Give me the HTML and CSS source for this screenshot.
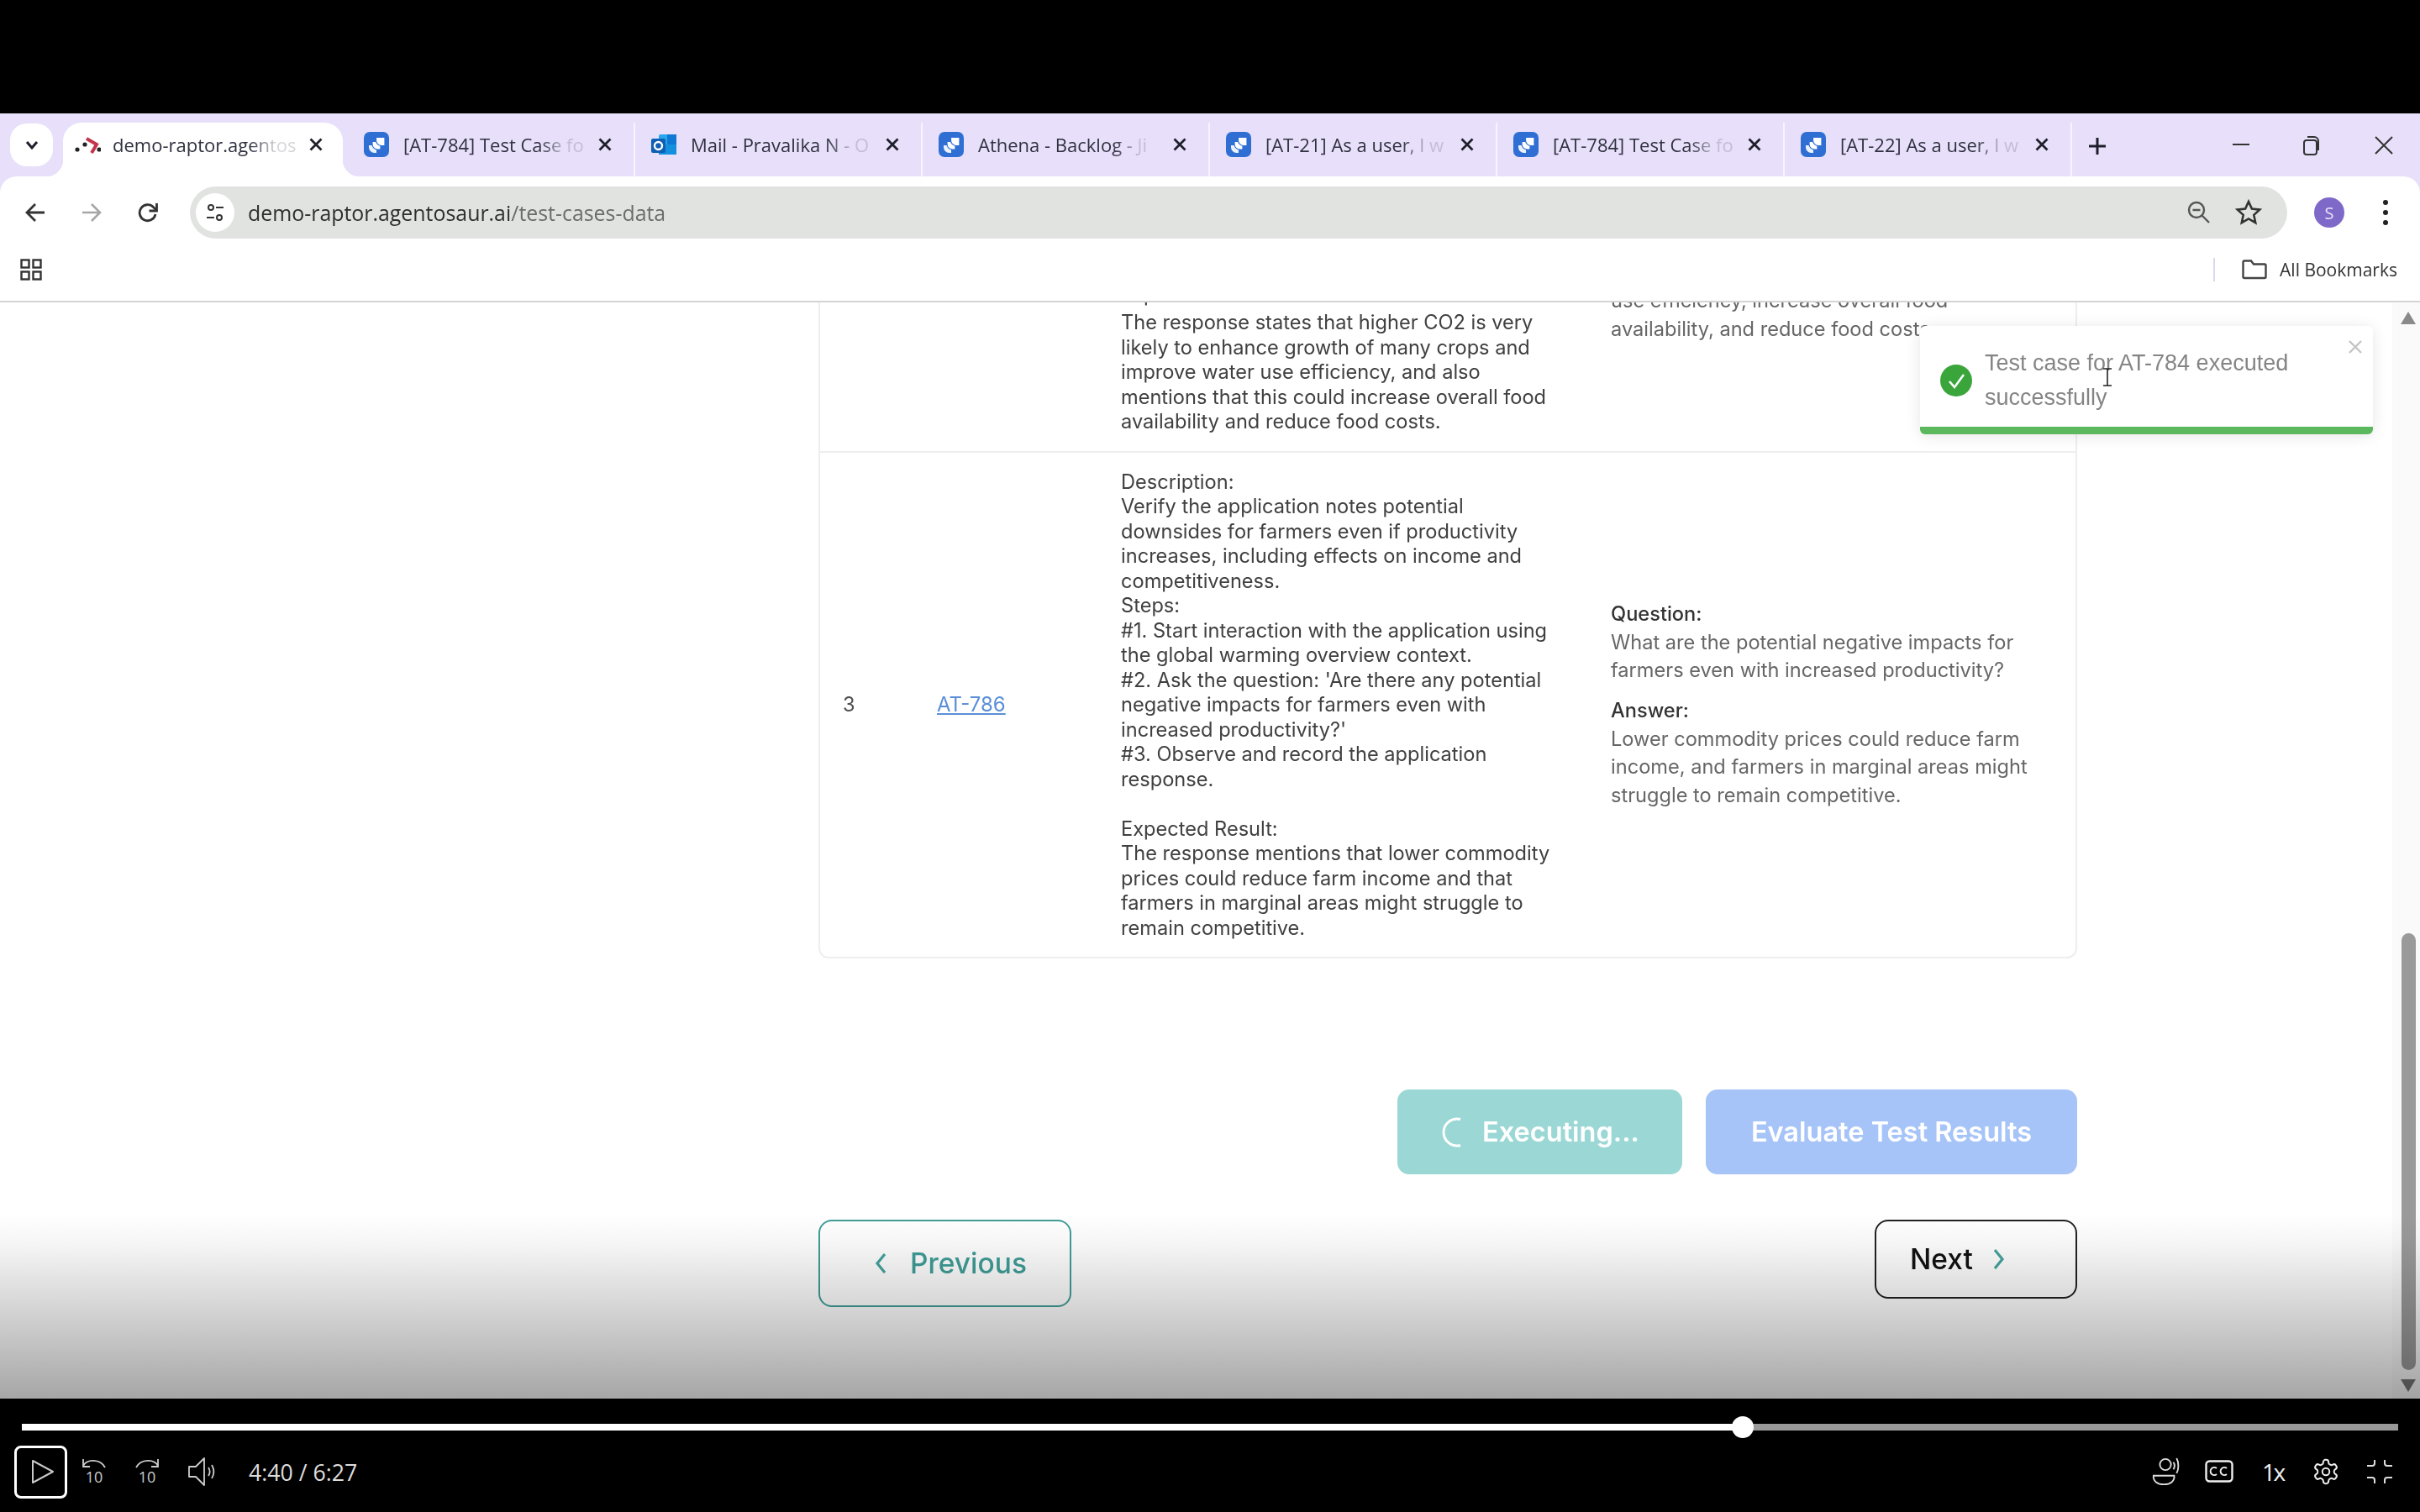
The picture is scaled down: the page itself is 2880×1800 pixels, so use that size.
FILE: index.html
```html
<!DOCTYPE html>
<html lang="en">
<head>
<meta charset="utf-8">
<title>demo-raptor.agentosaur.ai/test-cases-data</title>
<link rel="stylesheet" href="styles.css">
</head>
<body>
<svg class="defs" width="0" height="0" aria-hidden="true">
  <symbol id="jira" viewBox="0 0 30 30">
    <rect width="30" height="30" rx="7" fill="#2f6fd4"/>
    <path d="M6 16h9v9h-2.500A6.500 6.500 0 0 1 6 18.500z" fill="#fff" opacity=".9"/>
    <path d="M10 11.500h10v9.500h-3.500A6.500 6.500 0 0 1 10 14.500z" fill="#fff" stroke="#2f6fd4" stroke-width="1.200"/>
    <path d="M14.500 6.500H25v10h-4A6.500 6.500 0 0 1 14.500 10z" fill="#fff" stroke="#2f6fd4" stroke-width="1.200"/>
  </symbol>
  <symbol id="close" viewBox="0 0 20 20">
    <path d="M3.500 3.500l13 13M16.500 3.500l-13 13" fill="none" stroke="#1f1f2b" stroke-width="2.800"/>
  </symbol>
</svg>

<div class="video-top"></div>

<div class="chrome">
<header class="tabstrip">
  <div class="tab-search">
    <svg width="20" height="14" viewBox="0 0 20 14"><path d="M4 3l6 7 6-7" fill="none" stroke="#1f1f2b" stroke-width="3"/></svg>
  </div>
  <div class="tab tab-active">
    <svg class="favicon" viewBox="0 0 32 30">
      <circle cx="4" cy="21" r="2.600" fill="#222"/><circle cx="13" cy="15" r="2.600" fill="#222"/><circle cx="30" cy="21" r="2.600" fill="#222"/>
      <path d="M15 8l12 7-6 10" fill="none" stroke="#c4344a" stroke-width="4"/>
    </svg>
    <span class="tab-title">demo-raptor.agentos</span>
    <svg class="tab-close"><use href="#close"/></svg>
  </div>
  <div class="tab">
    <svg class="favicon"><use href="#jira"/></svg>
    <span class="tab-title">[AT-784] Test Case fo</span>
    <svg class="tab-close"><use href="#close"/></svg>
  </div>
  <div class="tab">
    <svg class="favicon" viewBox="0 0 30 30">
      <rect x="9" y="3" width="21" height="24" rx="2" fill="#28a8ea"/>
      <rect x="19" y="3" width="11" height="12" fill="#0f78d4"/>
      <rect x="9" y="15" width="21" height="12" fill="#1490df"/>
      <rect x="0" y="8" width="17" height="17" rx="2" fill="#0f5fb4"/>
      <circle cx="8.500" cy="16.500" r="4.500" fill="none" stroke="#fff" stroke-width="2.400"/>
    </svg>
    <span class="tab-title">Mail - Pravalika N - O</span>
    <svg class="tab-close"><use href="#close"/></svg>
  </div>
  <div class="tab">
    <svg class="favicon"><use href="#jira"/></svg>
    <span class="tab-title">Athena - Backlog - Ji</span>
    <svg class="tab-close"><use href="#close"/></svg>
  </div>
  <div class="tab">
    <svg class="favicon"><use href="#jira"/></svg>
    <span class="tab-title">[AT-21] As a user, I w</span>
    <svg class="tab-close"><use href="#close"/></svg>
  </div>
  <div class="tab">
    <svg class="favicon"><use href="#jira"/></svg>
    <span class="tab-title">[AT-784] Test Case fo</span>
    <svg class="tab-close"><use href="#close"/></svg>
  </div>
  <div class="tab">
    <svg class="favicon"><use href="#jira"/></svg>
    <span class="tab-title">[AT-22] As a user, I w</span>
    <svg class="tab-close"><use href="#close"/></svg>
  </div>
  <svg class="tab-new" width="24" height="24" viewBox="0 0 24 24"><path d="M12 2v20M2 12h20" fill="none" stroke="#1f1f2b" stroke-width="3"/></svg>
  <div class="window-controls">
    <svg width="26" height="26" viewBox="0 0 26 26"><path d="M3 12h20" stroke="#333" stroke-width="2"/></svg>
    <svg class="win-restore" width="26" height="26" viewBox="0 0 26 26"><rect x="5" y="7" width="15" height="17" rx="3" fill="none" stroke="#333" stroke-width="2"/><path d="M9 3h8a5 5 0 0 1 5 5v11" fill="none" stroke="#333" stroke-width="2"/></svg>
    <svg width="26" height="26" viewBox="0 0 26 26"><path d="M3 3l20 20M23 3L3 23" stroke="#333" stroke-width="2"/></svg>
  </div>
</header>

<nav class="toolbar">
  <div class="nav-btn"><svg width="26" height="26" viewBox="0 0 26 26"><path d="M24 13H3M13 3L3 13l10 10" fill="none" stroke="#333" stroke-width="2.800"/></svg></div>
  <div class="nav-btn"><svg width="26" height="26" viewBox="0 0 26 26"><path d="M2 13h21M13 3l10 10-10 10" fill="none" stroke="#a6a6a6" stroke-width="2.600"/></svg></div>
  <div class="nav-btn"><svg width="28" height="28" viewBox="0 0 28 28"><path d="M23 16a9.500 9.500 0 1 1-2.600-8.500L24 11" fill="none" stroke="#333" stroke-width="2.800"/><path d="M24.500 3v9h-9" fill="none" stroke="#333" stroke-width="2.800"/></svg></div>
  <div class="omnibox">
    <div class="site-info">
      <svg width="24" height="24" viewBox="0 0 24 24"><circle cx="7" cy="6" r="3" fill="none" stroke="#333" stroke-width="2"/><path d="M13 6h9M2 18h9" stroke="#333" stroke-width="2"/><circle cx="17" cy="18" r="3" fill="none" stroke="#333" stroke-width="2"/></svg>
    </div>
    <span class="url"><span class="url-host">demo-raptor.agentosaur.ai</span>/test-cases-data</span>
    <svg class="zoom-out" width="30" height="30" viewBox="0 0 30 30"><circle cx="12" cy="12" r="9" fill="none" stroke="#555" stroke-width="2.400"/><path d="M7.500 12h9M18.500 18.500L27 27" stroke="#555" stroke-width="2.400"/></svg>
    <svg class="star" width="32" height="32" viewBox="0 0 32 32"><path d="M16 3l3.900 8.600 9.300 1-6.900 6.300 1.900 9.200L16 23.400l-8.200 4.700 1.900-9.200-6.900-6.300 9.300-1z" fill="none" stroke="#333" stroke-width="2.600"/></svg>
  </div>
  <div class="avatar">S</div>
  <div class="kebab"><i></i><i></i><i></i></div>
</nav>

<div class="bookmarks">
  <svg width="26" height="26" viewBox="0 0 26 26"><g fill="none" stroke="#333" stroke-width="2.400"><rect x="1.500" y="1.500" width="9" height="9"/><rect x="15.500" y="1.500" width="9" height="9"/><rect x="1.500" y="15.500" width="9" height="9"/><rect x="15.500" y="15.500" width="9" height="9"/></g></svg>
  <div class="bookmarks-all">
    <svg width="30" height="24" viewBox="0 0 30 24"><path d="M1.500 21V3a1.500 1.500 0 0 1 1.500-1.500h8l3 4h13a1.500 1.500 0 0 1 1.500 1.500v13.500a1.500 1.500 0 0 1-1.500 1.500H3A1.500 1.500 0 0 1 1.500 21z" fill="none" stroke="#444" stroke-width="2.400"/></svg>
    <span>All Bookmarks</span>
  </div>
</div>
</div>

<main class="page">
  <section class="content">
    <div class="table">
      <div class="row row-partial">
        <div></div>
        <div></div>
        <div class="desc"><span class="desc-cut">Expected Result:</span>The response states that higher CO2 is very
likely to enhance growth of many crops and
improve water use efficiency, and also
mentions that this could increase overall food
availability and reduce food costs.</div>
        <div class="qa qa-partial"><p class="qa-text">use efficiency, increase overall food
availability, and reduce food costs.</p></div>
      </div>
      <div class="row row-last">
        <div class="index">3</div>
        <div><a class="issue" href="#">AT-786</a></div>
        <div class="desc">Description:
Verify the application notes potential
downsides for farmers even if productivity
increases, including effects on income and
competitiveness.
Steps:
#1. Start interaction with the application using
the global warming overview context.
#2. Ask the question: 'Are there any potential
negative impacts for farmers even with
increased productivity?'
#3. Observe and record the application
response.

Expected Result:
The response mentions that lower commodity
prices could reduce farm income and that
farmers in marginal areas might struggle to
remain competitive.</div>
        <div class="qa">
          <p class="qa-label">Question:</p>
          <p class="qa-text">What are the potential negative impacts for
farmers even with increased productivity?</p>
          <p class="qa-label qa-label-next">Answer:</p>
          <p class="qa-text">Lower commodity prices could reduce farm
income, and farmers in marginal areas might
struggle to remain competitive.</p>
        </div>
      </div>
    </div>

    <div class="actions">
      <button class="btn btn-exec" type="button">
        <svg width="36" height="38" viewBox="0 0 36 38"><path d="M24 3.500A16 16 0 1 0 24 34.500" fill="none" stroke="#fff" stroke-width="3"/></svg>
        Executing...
      </button>
      <button class="btn btn-eval" type="button">Evaluate Test Results</button>
    </div>

    <div class="pager">
      <button class="pager-btn pager-prev" type="button">
        <svg width="14" height="26" viewBox="0 0 14 26"><path d="M12 2L3 13l9 11" fill="none" stroke="#45a39d" stroke-width="3.200"/></svg>
        Previous
      </button>
      <button class="pager-btn pager-next" type="button">
        Next
        <svg width="14" height="26" viewBox="0 0 14 26"><path d="M2 2l9 11-9 11" fill="none" stroke="#45a39d" stroke-width="3.200"/></svg>
      </button>
    </div>
  </section>

  <aside class="scrollbar">
    <div class="arrow-up"></div>
    <div class="scroll-track"><div class="scroll-thumb"></div></div>
    <div class="arrow-down"></div>
  </aside>

  <div class="toast">
    <div class="toast-body">
      <svg class="toast-icon" viewBox="0 0 38 38"><circle cx="19" cy="19" r="19" fill="#3aa53a"/><path d="M11 20l6 7 11-15" fill="none" stroke="#fff" stroke-width="2.600"/></svg>
      <p class="toast-text">Test case for AT-784 executed<br>successfully</p>
    </div>
    <svg class="toast-close" width="18" height="18" viewBox="0 0 18 18"><path d="M2 2l14 14M16 2L2 16" stroke="#c4c4c4" stroke-width="2.400"/></svg>
    <div class="toast-progress"></div>
  </div>

  <svg class="ibeam" width="14" height="22" viewBox="0 0 14 22"><path d="M2 1h10M7 1v20M2 21h10" stroke="#222" stroke-width="1.600" fill="none"/></svg>

  <div class="shade"></div>
</main>

<footer class="player">
  <div class="progress">
    <div class="progress-played"></div>
    <div class="progress-rest"></div>
    <div class="progress-thumb"></div>
  </div>
  <div class="controls">
    <div class="play-btn">
      <svg width="28" height="30" viewBox="0 0 28 30"><path d="M2 2l24 13L2 28z" fill="none" stroke="#c8c8c8" stroke-width="2" stroke-linejoin="round"/></svg>
    </div>
    <svg class="ctl ctl-back" width="30" height="34" viewBox="0 0 30 34"><path d="M2 10C6 2 22 1 28 12" fill="none" stroke="#ccc" stroke-width="1.800"/><path d="M2 2v9h8" fill="none" stroke="#ccc" stroke-width="1.800"/><text x="15" y="30" class="ctl-num">10</text></svg>
    <svg class="ctl ctl-fwd" width="30" height="34" viewBox="0 0 30 34"><path d="M28 10C24 2 8 1 2 12" fill="none" stroke="#ccc" stroke-width="1.800"/><path d="M28 2v9h-8" fill="none" stroke="#ccc" stroke-width="1.800"/><text x="15" y="30" class="ctl-num">10</text></svg>
    <svg class="ctl ctl-vol" width="33" height="34" viewBox="0 0 33 34"><path d="M1 11h8L19 1v32L9 23H1z" fill="none" stroke="#ccc" stroke-width="1.800" stroke-linejoin="round"/><path d="M24 12c2 3 2 7 0 10M28 9c3 5 3 11 0 16" fill="none" stroke="#ccc" stroke-width="1.800"/></svg>
    <span class="time">4:40 / 6:27</span>
    <div class="controls-right">
      <svg width="34" height="34" viewBox="0 0 36 36"><circle cx="17" cy="9" r="7" fill="none" stroke="#ddd" stroke-width="2"/><path d="M2 23h26c1 7-5 11-13 11S1 30 2 23z" fill="none" stroke="#ddd" stroke-width="2"/><path d="M27 6c2 3 2 6 0 9M31 1c3 5 3 14 0 19" fill="none" stroke="#ddd" stroke-width="2"/></svg>
      <svg width="34" height="28" viewBox="0 0 34 28"><rect x="1.500" y="1.500" width="31" height="24" rx="4" fill="none" stroke="#eee" stroke-width="2.400"/><path d="M14 10a4.500 4.500 0 1 0 0 7M26 10a4.500 4.500 0 1 0 0 7" fill="none" stroke="#eee" stroke-width="2"/></svg>
      <span class="speed">1x</span>
      <svg class="gear" width="34" height="34" viewBox="0 0 24 24"><path d="M12.220 2h-.44a2 2 0 0 0-2 2v.18a2 2 0 0 1-1 1.730l-.43.25a2 2 0 0 1-2 0l-.15-.08a2 2 0 0 0-2.730.73l-.22.38a2 2 0 0 0 .73 2.730l.15.1a2 2 0 0 1 1 1.720v.51a2 2 0 0 1-1 1.740l-.15.09a2 2 0 0 0-.73 2.730l.22.38a2 2 0 0 0 2.730.73l.15-.08a2 2 0 0 1 2 0l.43.25a2 2 0 0 1 1 1.730V20a2 2 0 0 0 2 2h.44a2 2 0 0 0 2-2v-.18a2 2 0 0 1 1-1.730l.43-.25a2 2 0 0 1 2 0l.15.08a2 2 0 0 0 2.730-.73l.22-.39a2 2 0 0 0-.73-2.730l-.15-.08a2 2 0 0 1-1-1.740v-.5a2 2 0 0 1 1-1.740l.15-.09a2 2 0 0 0 .73-2.730l-.22-.38a2 2 0 0 0-2.730-.73l-.15.08a2 2 0 0 1-2 0l-.43-.25a2 2 0 0 1-1-1.730V4a2 2 0 0 0-2-2z" fill="none" stroke="#eee" stroke-width="1.400"/><circle cx="12" cy="12" r="3" fill="none" stroke="#eee" stroke-width="1.400"/></svg>
      <svg width="30" height="30" viewBox="0 0 30 30"><path d="M9 1v4a3 3 0 0 1-3 3H0M21 1v4a3 3 0 0 0 3 3h6M9 29v-4a3 3 0 0 0-3-3H0M21 29v-4a3 3 0 0 1 3-3h6" fill="none" stroke="#ddd" stroke-width="2"/></svg>
    </div>
  </div>
</footer>
</body>
</html>
```
FILE: styles.css
```css
* { box-sizing: border-box; }
html, body { margin: 0; padding: 0; }
body {
  width: 2880px;
  height: 1800px;
  overflow: hidden;
  display: flex;
  flex-direction: column;
  background: #000;
  font-family: "Inter", "Liberation Sans", sans-serif;
}
.defs { position: absolute; }
p { margin: 0; }

.video-top { height: 135px; background: #000; flex: none; }

.chrome {
  flex: none;
  background: #e8e0fa;
  filter: blur(.5px);
}

/* tab strip */
.tabstrip {
  height: 75px;
  display: flex;
  align-items: flex-end;
  padding-left: 12px;
  font-family: "Open Sans", "Noto Sans", sans-serif;
  font-size: 22px;
  color: #303040;
}
.tab-search {
  width: 51px;
  height: 51px;
  margin-bottom: 12px;
  margin-right: 12px;
  background: #fff;
  border-radius: 20px;
  display: flex;
  align-items: center;
  justify-content: center;
  flex: none;
}
.tab {
  width: 342px;
  height: 64px;
  padding: 0 24px 12px 19px;
  display: flex;
  align-items: center;
  border-right: 2px solid #f7f4ff;
  background-clip: padding-box;
  flex: none;
}
.tab-active {
  position: relative;
  width: 333px;
  margin-right: 6px;
  padding-left: 13px;
  padding-right: 22px;
  background: #fff;
  border-right: 0;
  border-radius: 22px 22px 0 0;
}
.tab-active::before,
.tab-active::after {
  content: "";
  position: absolute;
  bottom: 0;
  width: 20px;
  height: 20px;
}
.tab-active::before { left: -20px; background: radial-gradient(circle at 0 0, transparent 20px, #fff 20.5px); }
.tab-active::after { right: -20px; background: radial-gradient(circle at 100% 0, transparent 20px, #fff 20.5px); }
.favicon { width: 30px; height: 30px; flex: none; }
.tab-active .favicon { width: 32px; }
.tab-title {
  flex: 1;
  min-width: 0;
  margin: 0 12px 0 17px;
  white-space: nowrap;
  -webkit-mask-image: linear-gradient(90deg, #000 74%, rgba(0,0,0,.2) 88%);
  mask-image: linear-gradient(90deg, #000 74%, rgba(0,0,0,.2) 88%);
}
.tab-active .tab-title { margin-left: 14px; }
.tab-close { width: 20px; height: 20px; flex: none; }
.tab-new { margin: 0 0 24px 18px; flex: none; }
.window-controls {
  margin-left: auto;
  margin-bottom: 24px;
  display: flex;
  gap: 57px;
  padding-right: 30px;
}
.win-restore { margin-right: 4px; }

/* toolbar */
.toolbar {
  height: 80px;
  background: #fff;
  border-radius: 20px 20px 0 0;
  padding: 12px 28px 6px 8px;
  display: flex;
  align-items: center;
}
.nav-btn { width: 67px; display: flex; justify-content: center; flex: none; }
.omnibox {
  margin-left: 17px;
  width: 2496px;
  height: 62px;
  background: #e1e3e1;
  border-radius: 31px;
  display: flex;
  align-items: center;
  padding: 0 30px 0 7px;
  flex: none;
}
.site-info {
  width: 46px;
  height: 46px;
  background: #fff;
  border-radius: 50%;
  display: flex;
  align-items: center;
  justify-content: center;
}
.url {
  margin-left: 16px;
  font-family: "Open Sans", "Noto Sans", sans-serif;
  font-size: 24.900px;
  color: #6c6c6c;
}
.url-host { color: #2e2e2e; }
.zoom-out { margin-left: auto; margin-right: 28px; }
.avatar {
  margin-left: 32px;
  width: 36px;
  height: 36px;
  border-radius: 50%;
  background: #7e69c9;
  color: #e8e4f6;
  font: 20px "Open Sans", sans-serif;
  display: flex;
  align-items: center;
  justify-content: center;
  flex: none;
}
.kebab {
  margin-left: 46px;
  display: flex;
  flex-direction: column;
  gap: 6px;
  flex: none;
}
.kebab i { width: 6px; height: 6px; background: #222; border-radius: 50%; }

/* bookmarks */
.bookmarks {
  height: 70px;
  background: #fff;
  border-bottom: 2px solid #d4d4d4;
  padding: 0 27px 6px 24px;
  display: flex;
  align-items: center;
  justify-content: space-between;
}
.bookmarks-all {
  display: flex;
  align-items: center;
  gap: 15px;
  padding-left: 32px;
  border-left: 2px solid #ddd8ee;
  font-family: "Open Sans", "Noto Sans", sans-serif;
  font-size: 21px;
  color: #333;
}

/* page */
.page {
  flex: 1;
  position: relative;
  overflow: hidden;
  background: #fff;
  display: flex;
  min-height: 0;
  filter: blur(.5px);
}
.content {
  width: 1498px;
  margin-left: 974px;
  padding-bottom: 109px;
  display: flex;
  flex-direction: column;
  justify-content: flex-end;
  height: 100%;
  flex: none;
}
.table {
  border: 2px solid #eeeeee;
  border-top: 0;
  border-radius: 0 0 12px 12px;
  flex: none;
  font-size: 23.600px;
}
.row {
  display: grid;
  grid-template-columns: 139px 219px 583px 1fr;
  align-items: center;
}
.row-partial { align-items: end; padding-bottom: 20px; border-bottom: 2px solid #eeeeee; }
.row-last { padding: 20px 0; }
.desc {
  white-space: pre-line;
  line-height: 29.500px;
  color: #404040;
}
.desc-cut { display: block; margin-bottom: 4px; }
.index { padding-left: 27px; color: #505050; }
.issue { color: #5a8fd8; font-size: 24px; }
.qa-partial { padding-bottom: 108px; }
.qa-text { line-height: 33.600px; color: #666; white-space: pre-line; }
.qa-label { line-height: 33.600px; color: #333; font-weight: 500; }
.qa-label-next { margin-top: 14px; }

.actions {
  margin-top: 156px;
  display: flex;
  justify-content: flex-end;
  gap: 28px;
  flex: none;
}
.btn {
  height: 101px;
  border: 0;
  border-radius: 14px;
  color: #fff;
  font: 600 32.500px "Inter", sans-serif;
  display: flex;
  align-items: center;
  justify-content: center;
  gap: 14px;
}
.btn-exec { width: 339px; background: #9bd8d5; }
.btn-eval { width: 442px; background: #a6c4f8; }

.pager {
  margin-top: 54px;
  display: flex;
  justify-content: space-between;
  align-items: flex-start;
  flex: none;
}
.pager-btn {
  background: #fff;
  border-radius: 16px;
  display: flex;
  align-items: center;
  font: 500 33.500px "Inter", sans-serif;
}
.pager-prev {
  width: 301px;
  height: 104px;
  border: 2px solid #3f9e98;
  color: #3f9e98;
  padding-left: 65px;
  gap: 28px;
}
.pager-next {
  width: 241px;
  height: 94px;
  border: 2px solid #222;
  color: #111;
  padding-left: 40px;
  gap: 24px;
}

/* scrollbar */
.scrollbar {
  margin-left: auto;
  width: 33px;
  flex: none;
  background: #fafafa;
  display: flex;
  flex-direction: column;
  align-items: center;
  padding: 11px 0 8px 5px;
}
.arrow-up { width: 0; height: 0; border: 9px solid transparent; border-top: 0; border-bottom: 15px solid #8a8a8a; flex: none; }
.arrow-down { width: 0; height: 0; border: 9px solid transparent; border-bottom: 0; border-top: 15px solid #777; flex: none; }
.scroll-track {
  flex: 1;
  display: flex;
  flex-direction: column;
  justify-content: flex-end;
  padding-bottom: 11px;
}
.scroll-thumb { width: 17px; height: 520px; background: #9a9a9a; border-radius: 9px; }

/* toast */
.toast {
  position: absolute;
  left: 2285px;
  top: 28px;
  width: 539px;
  height: 129px;
  background: #fff;
  box-shadow: 0 2px 18px rgba(0,0,0,.1);
  border-radius: 6px;
  display: flex;
  flex-direction: column;
}
.toast-body {
  flex: 1;
  display: flex;
  align-items: center;
  gap: 15px;
  padding: 9px 0 0 24px;
}
.toast-icon { width: 38px; height: 38px; flex: none; }
.toast-text {
  font: 27px/41px "Liberation Sans", sans-serif;
  color: #858585;
  white-space: nowrap;
}
.toast-close { position: absolute; right: 12px; top: 16px; }
.toast-progress { height: 9px; background: #5cb85c; border-radius: 0 0 6px 6px; flex: none; }
.ibeam { position: absolute; left: 2501px; top: 78px; }

.shade {
  position: absolute;
  left: 0;
  right: 0;
  bottom: 0;
  height: 220px;
  pointer-events: none;
  background: linear-gradient(180deg, rgba(0,0,0,0) 0%, rgba(0,0,0,.03) 14%, rgba(0,0,0,.2) 60%, rgba(0,0,0,.35) 100%);
}

/* player */
.player {
  flex: none;
  height: 135px;
  background: #000;
  padding-top: 30px;
}
.progress {
  position: relative;
  margin: 0 26px;
  height: 8px;
  display: flex;
}
.progress-played { width: 2046px; background: #fff; flex: none; }
.progress-rest { flex: 1; background: #9a9a9a; }
.progress-thumb {
  position: absolute;
  left: 2035px;
  top: -9px;
  width: 26px;
  height: 26px;
  background: #fff;
  border-radius: 50%;
}
.controls {
  margin-top: 18px;
  height: 62px;
  padding: 0 33px 0 17px;
  display: flex;
  align-items: center;
}
.play-btn {
  width: 63px;
  height: 63px;
  border: 3px solid #fff;
  border-radius: 8px;
  padding-left: 4px;
  display: flex;
  align-items: center;
  justify-content: center;
  flex: none;
}
.ctl { flex: none; }
.ctl-back { margin-left: 17px; }
.ctl-fwd { margin-left: 33px; }
.ctl-vol { margin-left: 34px; }
.ctl-num { font: 18px "Open Sans", sans-serif; fill: #ccc; text-anchor: middle; }
.time {
  margin-left: 39px;
  font: 26.700px "Open Sans", sans-serif;
  color: #ddd;
}
.controls-right {
  margin-left: auto;
  display: flex;
  align-items: center;
  gap: 29px;
}
.speed { width: 25px; margin: 0 5px 0 5px; font: 28px "Open Sans", sans-serif; letter-spacing: -2.500px; color: #eee; white-space: nowrap; }
.gear { margin-right: 3px; }
```
